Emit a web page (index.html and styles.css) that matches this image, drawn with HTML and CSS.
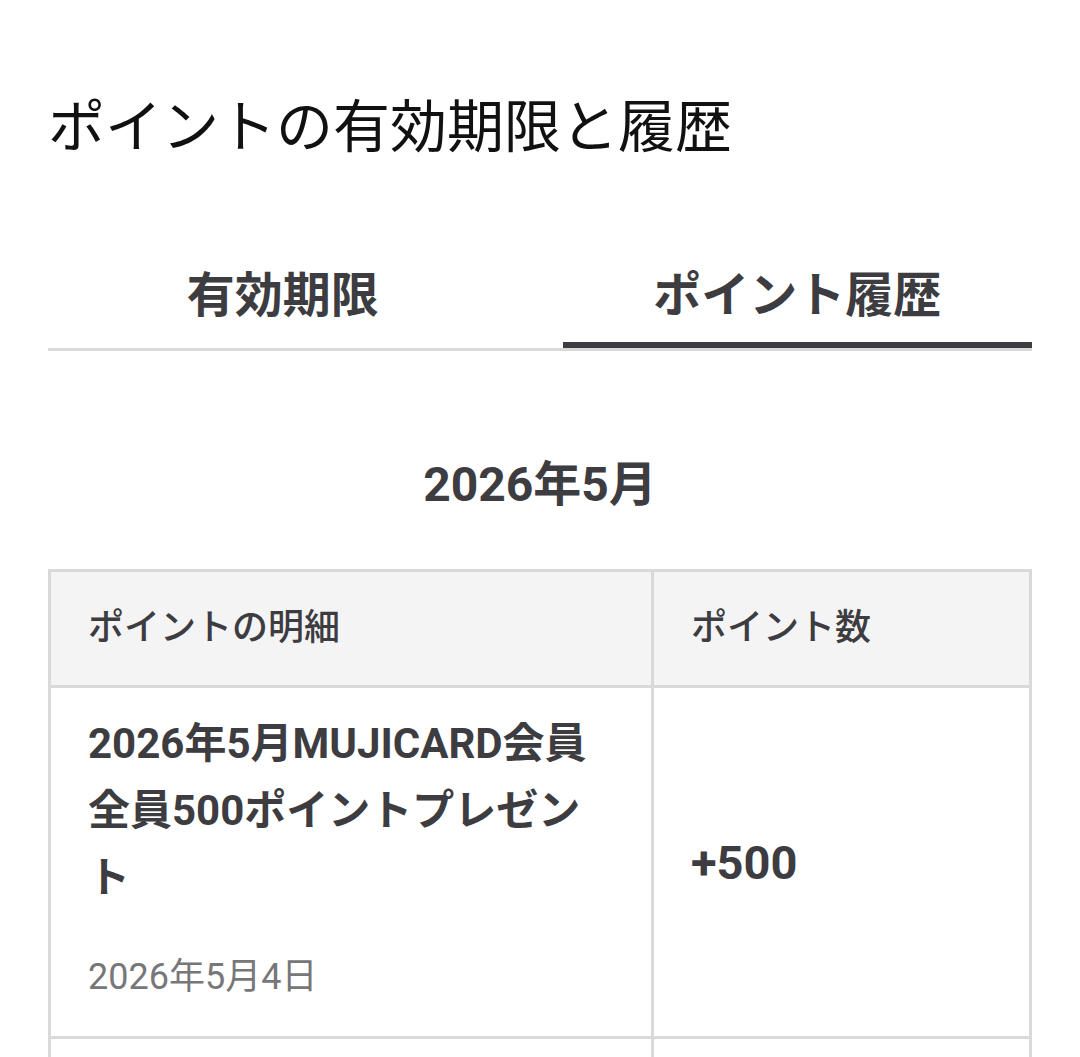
FILE: index.html
```html
<!DOCTYPE html>
<html lang="ja">
<head>
    <meta charset="UTF-8">
    <meta name="viewport" content="width=device-width, initial-scale=1.0">
    <title>ポイントの有効期限と履歴</title>
    <link rel="stylesheet" href="styles.css">
</head>
<body>
    <main class="page">
        <h1 class="page-title">ポイントの有効期限と履歴</h1>

        <!-- Tabs -->
        <nav class="tabs" role="tablist">
            <button class="tab" role="tab" aria-selected="false">有効期限</button>
            <button class="tab tab-active" role="tab" aria-selected="true">ポイント履歴</button>
        </nav>

        <!-- History -->
        <section class="history">
            <h2 class="month">2026年5月</h2>
            <table class="history-table">
                <thead>
                    <tr>
                        <th class="col-detail">ポイントの明細</th>
                        <th class="col-points">ポイント数</th>
                    </tr>
                </thead>
                <tbody>
                    <tr>
                        <td class="col-detail">
                            <p class="item-name">2026年5月MUJICARD会員全員500ポイントプレゼント</p>
                            <p class="item-date">2026年5月4日</p>
                        </td>
                        <td class="col-points"><span class="points">+500</span></td>
                    </tr>
                    <tr>
                        <td class="col-detail">
                            <p class="item-name">2026年4月MUJICARD会員全員500ポイントプレゼント</p>
                            <p class="item-date">2026年4月4日</p>
                        </td>
                        <td class="col-points"><span class="points">+500</span></td>
                    </tr>
                </tbody>
            </table>
        </section>
    </main>
</body>
</html>
```

FILE: styles.css
```css
:root {
    --text-dark: #3c3c41;
    --text-black: #111111;
    --text-muted: #77777a;
    --border: #d9d9d9;
    --head-bg: #f4f4f4;
}

body {
    margin: 0;
    padding: 0;
    background: #ffffff;
    color: var(--text-dark);
    font-family: Roboto, "Noto Sans CJK JP", sans-serif;
}

.page {
    padding: 89px 48px 0;
}

.page-title {
    margin: 0;
    font-size: 57px;
    font-weight: 400;
    line-height: 78px;
    color: var(--text-black);
}

.tabs {
    display: flex;
    gap: 45px;
    margin-top: 83px;
    border-bottom: 3px solid var(--border);
}

.tab {
    flex: 1;
    padding: 13px 0 19px;
    border: 0;
    background: none;
    font-family: inherit;
    font-size: 48px;
    font-weight: 700;
    line-height: 66px;
    color: var(--text-dark);
    text-align: center;
}

.tab-active {
    padding-bottom: 13px;
    border-bottom: 6px solid var(--text-dark);
}

.month {
    margin: 101px 0 51px;
    font-size: 48px;
    font-weight: 700;
    line-height: 66px;
    text-align: center;
}

.history-table {
    width: 100%;
    border-collapse: collapse;
    border: 3px solid var(--border);
}

.history-table th,
.history-table td {
    border: 3px solid var(--border);
    text-align: left;
    vertical-align: middle;
}

.history-table th {
    padding: 28px 37px;
    background: var(--head-bg);
    font-size: 36px;
    font-weight: 500;
    line-height: 57px;
}

.history-table td {
    padding: 22px 37px 34px;
}

.history-table td.col-points {
    padding-top: 27px;
    padding-bottom: 27px;
}

.col-detail {
    width: 526px;
}

.item-name {
    margin: 0;
    font-size: 42px;
    font-weight: 700;
    line-height: 67px;
}

.item-date {
    margin: 41px 0 0;
    font-size: 36px;
    line-height: 50px;
    color: var(--text-muted);
}

.points {
    font-size: 47px;
    font-weight: 700;
}
```
